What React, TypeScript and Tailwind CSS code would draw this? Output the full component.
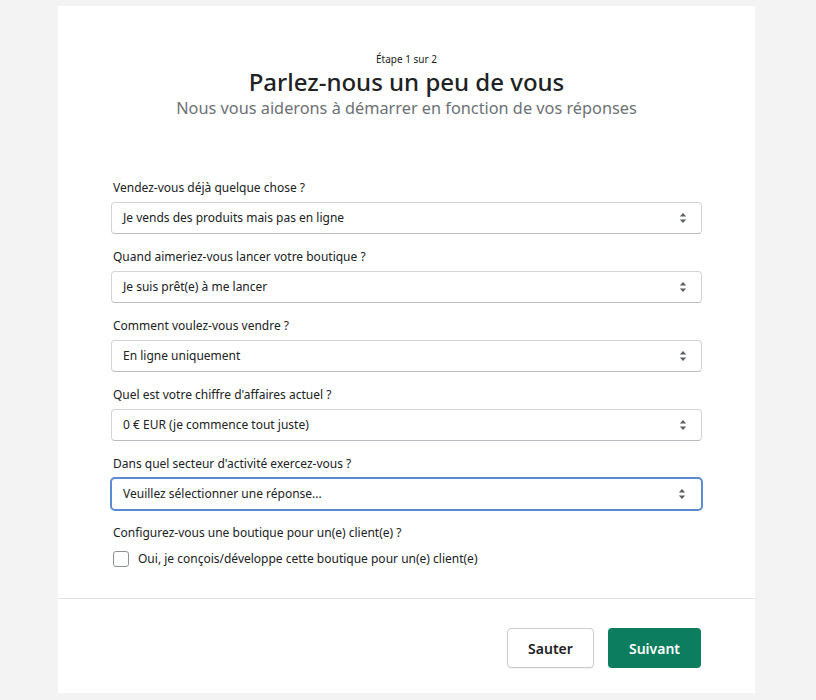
import React from 'react';

const font = { fontFamily: '"Noto Sans", "Open Sans", Arial, sans-serif' };

const Arrows: React.FC = () => (
  <svg width="8" height="12" viewBox="0 0 8 12" className="text-[#5c5f62]" fill="currentColor">
    <path d="M4 1 7.2 4.6H0.8z" />
    <path d="M4 11 0.8 7.4h6.4z" />
  </svg>
);

interface FieldProps {
  label: string;
  value: string;
  focused?: boolean;
}

const Field: React.FC<FieldProps> = ({ label, value, focused }) => (
  <div className="flex flex-col">
    <label className="text-[12px] leading-[18px] text-[#202223] mb-[5px] pl-[2px]">{label}</label>
    {focused ? (
      <div className="-mx-[1px] -my-[1px] h-[34px] flex items-center justify-between pl-[11px] pr-[15px] rounded-[5px] border-2 border-[#5b8bd0] bg-white">
        <span className="text-[12px] text-[#202223]">{value}</span>
        <Arrows />
      </div>
    ) : (
      <div className="h-[32px] flex items-center justify-between pl-[11px] pr-[14px] rounded-[4px] border border-[#d2d5d8] border-b-[#b9bdc1] bg-white">
        <span className="text-[12px] text-[#202223]">{value}</span>
        <Arrows />
      </div>
    )}
  </div>
);

const fields: FieldProps[] = [
  { label: 'Vendez-vous déjà quelque chose ?', value: 'Je vends des produits mais pas en ligne' },
  { label: 'Quand aimeriez-vous lancer votre boutique ?', value: 'Je suis prêt(e) à me lancer' },
  { label: 'Comment voulez-vous vendre ?', value: 'En ligne uniquement' },
  { label: "Quel est votre chiffre d'affaires actuel ?", value: '0 € EUR (je commence tout juste)' },
  { label: "Dans quel secteur d'activité exercez-vous ?", value: 'Veuillez sélectionner une réponse...', focused: true },
];

export default function App() {
  return (
    <div className="min-h-[700px] bg-[#f3f3f3] pt-[6px] pl-[58px]" style={font}>
      <div className="w-[697px] h-[687px] bg-white flex flex-col">
        <div className="pt-[46px] flex flex-col items-center">
          <p className="text-[10px] leading-[14px] text-[#202223]">Étape 1 sur 2</p>
          <h1 className="mt-[1px] text-[24px] leading-[30px] font-medium text-[#202223]">Parlez-nous un peu de vous</h1>
          <p className="text-[16.3px] leading-[22px] text-[#6d7175]">Nous vous aiderons à démarrer en fonction de vos réponses</p>
        </div>

        <div className="mt-[60px] px-[53px] flex flex-col gap-[14px]">
          {fields.map((f) => (
            <Field key={f.label} {...f} />
          ))}
          <div className="flex flex-col">
            <p className="text-[12px] leading-[18px] text-[#202223] mb-[8px] pl-[2px]">Configurez-vous une boutique pour un(e) client(e) ?</p>
            <div className="flex items-center gap-[9px] pl-[2px]">
              <span className="w-[16px] h-[16px] rounded-[3px] border border-[#8c9196] bg-white" />
              <span className="text-[12px] text-[#202223]">Oui, je conçois/développe cette boutique pour un(e) client(e)</span>
            </div>
          </div>
        </div>

        <div className="mt-auto border-t border-[#e1e3e5] h-[95px] pt-[29px] px-[54px] flex justify-end gap-[14px]">
          <button className="h-[40px] w-[87px] rounded-[4px] border border-[#c9cccf] bg-white text-[14px] font-semibold text-[#202223] shadow-[0_1px_0_rgba(0,0,0,0.05)]">
            Sauter
          </button>
          <button className="h-[40px] w-[93px] rounded-[4px] bg-[#0d7d5f] text-[14px] font-semibold text-white">
            Suivant
          </button>
        </div>
      </div>
    </div>
  );
}
